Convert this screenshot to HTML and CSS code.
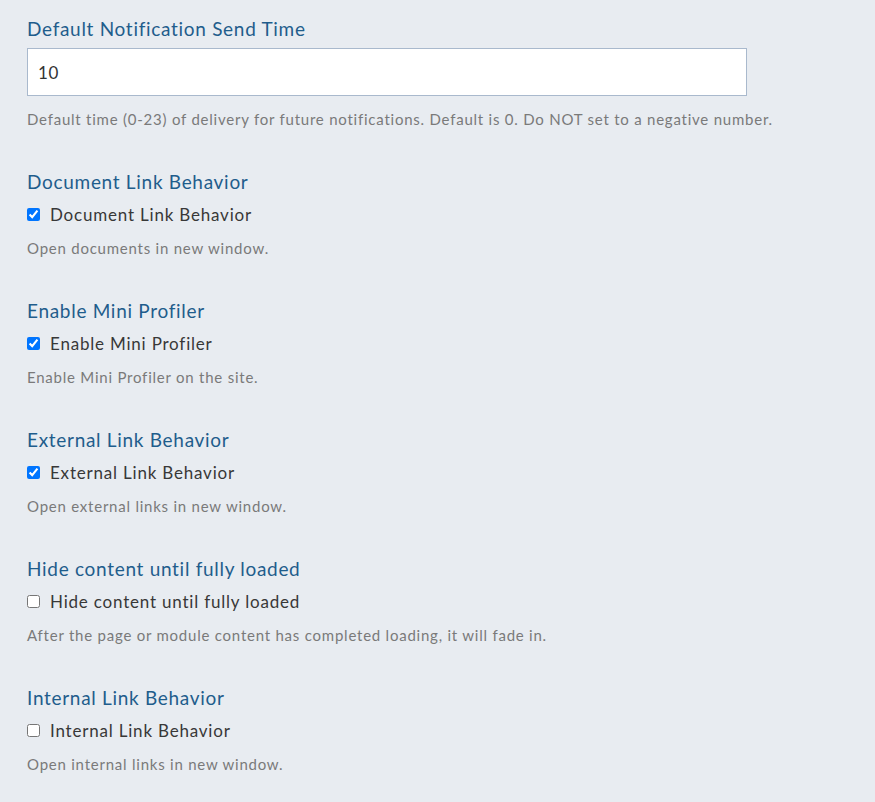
FILE: index.html
```html
<!DOCTYPE html>
<html lang="en">
<head>
<meta charset="utf-8">
<title>Settings</title>
<link rel="stylesheet" href="styles.css">
</head>
<body>
<main class="settings">
  <section class="setting">
    <h2 class="setting-title">Default Notification Send Time</h2>
    <input class="text-input" type="text" value="10">
    <p class="help">Default time (0-23) of delivery for future notifications. Default is 0. Do NOT set to a negative number.</p>
  </section>
  <section class="setting">
    <h2 class="setting-title">Document Link Behavior</h2>
    <label class="check-row"><input type="checkbox" checked><span>Document Link Behavior</span></label>
    <p class="help">Open documents in new window.</p>
  </section>
  <section class="setting">
    <h2 class="setting-title">Enable Mini Profiler</h2>
    <label class="check-row"><input type="checkbox" checked><span>Enable Mini Profiler</span></label>
    <p class="help">Enable Mini Profiler on the site.</p>
  </section>
  <section class="setting">
    <h2 class="setting-title">External Link Behavior</h2>
    <label class="check-row"><input type="checkbox" checked><span>External Link Behavior</span></label>
    <p class="help">Open external links in new window.</p>
  </section>
  <section class="setting">
    <h2 class="setting-title">Hide content until fully loaded</h2>
    <label class="check-row"><input type="checkbox"><span>Hide content until fully loaded</span></label>
    <p class="help">After the page or module content has completed loading, it will fade in.</p>
  </section>
  <section class="setting">
    <h2 class="setting-title">Internal Link Behavior</h2>
    <label class="check-row"><input type="checkbox"><span>Internal Link Behavior</span></label>
    <p class="help">Open internal links in new window.</p>
  </section>
</main>
</body>
</html>
```

FILE: styles.css
```css
html, body {
  margin: 0;
  padding: 0;
  background: #e8ecf1;
}
body {
  font-family: Lato, "Noto Sans", sans-serif;
  color: #333;
}
.settings {
  padding: 17px 27px 0;
  display: flex;
  flex-direction: column;
}
.setting {
  display: flex;
  flex-direction: column;
  align-items: flex-start;
  margin-bottom: 41px;
}
.setting-title {
  margin: 0 0 8px;
  font-size: 19px;
  line-height: 24px;
  font-weight: 400;
  letter-spacing: 0.7px;
  color: #1f5d8c;
}
.text-input {
  box-sizing: border-box;
  width: 720px;
  height: 48px;
  margin: -1px 0 1px;
  padding: 0 10px;
  border: 1px solid #a9b9cd;
  border-radius: 0;
  background: #fff;
  font-family: inherit;
  font-size: 17px;
  letter-spacing: 0.6px;
  color: #333;
}
.check-row {
  display: flex;
  align-items: center;
  gap: 10px;
  height: 24px;
  font-size: 17px;
  letter-spacing: 0.8px;
  color: #383838;
}
.check-row input {
  margin: 0;
  width: 13px;
  height: 13px;
}
.help {
  margin: 12px 0 0;
  font-size: 15px;
  line-height: 20px;
  letter-spacing: 0.77px;
  color: #7a7a7a;
}
```
